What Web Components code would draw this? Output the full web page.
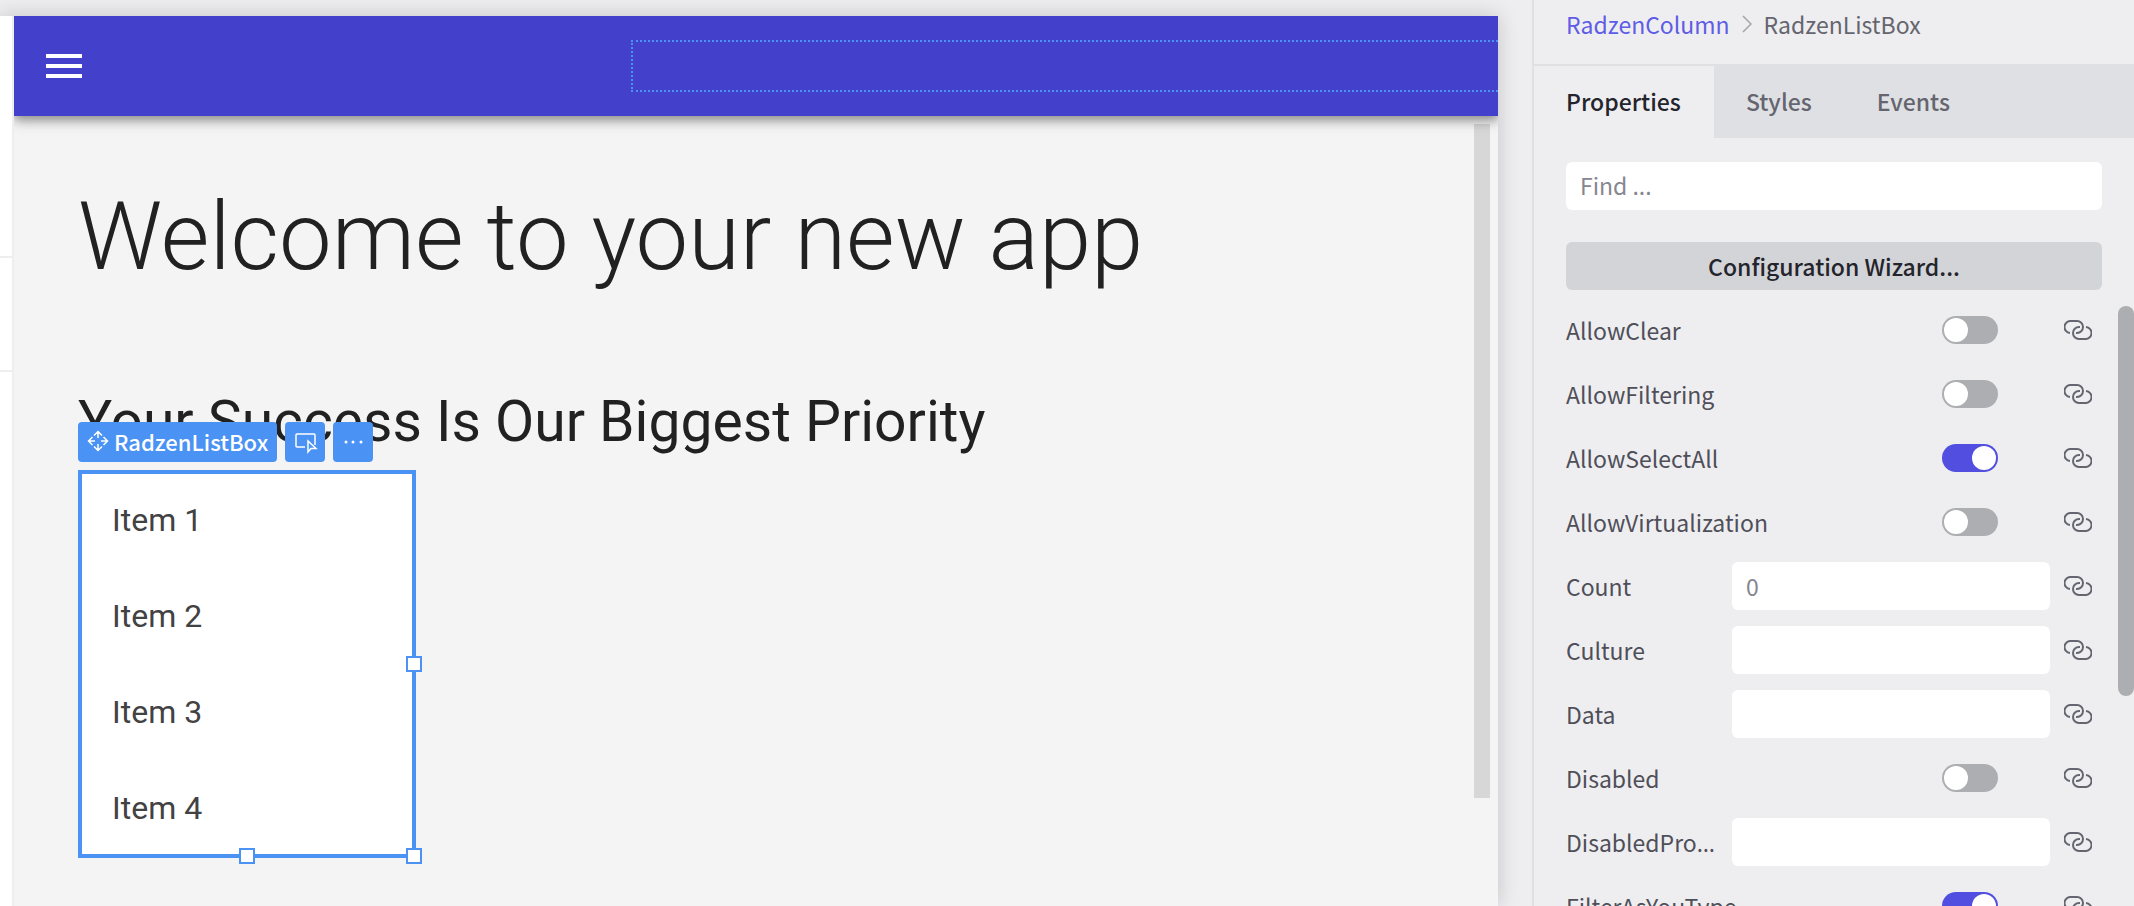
<!DOCTYPE html>
<html lang="en">
<head>
<meta charset="utf-8">
<title>Designer</title>
<style>
  html, body { height: 100%; margin: 0; }
  body {
    overflow: hidden;
    background: #eeeef0;
    font-family: "Noto Sans CJK KR", "Noto Sans", sans-serif;
    font-size: 23px;
    line-height: 32px;
    color: #4f4f59;
  }
</style>
</head>
<body>

<designer-shell>
  <app-canvas slot="canvas">
    <h1 slot="title">Welcome to your new app</h1>
    <h2 slot="subtitle">Your Success Is Our Biggest Priority</h2>
    <selected-component name="RadzenListBox">
      <list-box items="Item 1,Item 2,Item 3,Item 4"></list-box>
    </selected-component>
  </app-canvas>

  <property-panel slot="panel">
    <crumb-trail slot="crumbs" parent="RadzenColumn" current="RadzenListBox"></crumb-trail>
    <tab-strip slot="tabs" tabs="Properties,Styles,Events"></tab-strip>
    <property-row name="AllowClear" type="switch"></property-row>
    <property-row name="AllowFiltering" type="switch"></property-row>
    <property-row name="AllowSelectAll" type="switch" checked></property-row>
    <property-row name="AllowVirtualization" type="switch"></property-row>
    <property-row name="Count" type="text" hint="0"></property-row>
    <property-row name="Culture" type="text"></property-row>
    <property-row name="Data" type="text"></property-row>
    <property-row name="Disabled" type="switch"></property-row>
    <property-row name="DisabledProperty" type="text"></property-row>
    <property-row name="FilterAsYouType" type="switch" checked></property-row>
  </property-panel>
</designer-shell>

<script>
class DesignerShell extends HTMLElement {
  constructor() {
    super();
    this.attachShadow({ mode: 'open' }).innerHTML = `
      <style>
        :host { display: flex; height: 100vh; overflow: hidden; }
        main { flex: 1; min-width: 0; padding: 16px 34px 0 0; overflow: hidden; }
        aside { flex: 0 0 600px; border-left: 2px solid #dfe0e3; }
      </style>
      <main><slot name="canvas"></slot></main>
      <aside><slot name="panel"></slot></aside>
    `;
  }
}
customElements.define('designer-shell', DesignerShell);


class AppCanvas extends HTMLElement {
  constructor() {
    super();
    this.attachShadow({ mode: 'open' }).innerHTML = `
      <style>
        :host {
          display: flex; height: 100%;
          background: #f4f4f4;
          box-shadow: 0 0 20px rgba(0, 0, 0, 0.18);
          font-family: Roboto, sans-serif;
          color: #212121;
        }
        .rail { flex: 0 0 12px; background: #fff; border-right: 2px solid #eee; }
        .rail i { display: block; height: 112px; border-bottom: 2px solid #eee; }
        .rail i:first-child { height: 240px; }
        .app { flex: 1; min-width: 0; display: flex; flex-direction: column; }
        header {
          flex: 0 0 100px; box-sizing: border-box; padding-left: 32px;
          display: flex; align-items: center; justify-content: space-between;
          position: relative; z-index: 1;
          background: #4340cb;
          box-shadow: 0 4px 10px rgba(0, 0, 0, 0.4), 0 8px 16px rgba(0, 0, 0, 0.06);
          /* keep the shadow below the bar only */
          clip-path: inset(0 0 -32px 0);
        }
        button { padding: 0; border: 0; background: none; }
        svg { display: block; width: 36px; height: 24px; }
        .drop {
          width: calc(60% - 4px); height: 52px; box-sizing: border-box;
          border: 2px dotted #4a92f3; border-right: 0;
        }
        .view { flex: 1; display: flex; min-height: 0; }
        .page { flex: 1; min-width: 0; padding: 64px 0 0 64px; }
        .bar { flex: 0 0 16px; height: 674px; margin: 8px 8px 0 0; background: #d7d7d7; }
        ::slotted(h1) { margin: 0; font-weight: 300; font-size: 94px; line-height: 114px; }
        ::slotted(h2) { margin: 88px 0 0; font-weight: 400; font-size: 57px; line-height: 80px; }
      </style>
      <div class="rail"><i></i><i></i></div>
      <div class="app">
        <header>
          <button aria-label="Toggle menu">
            <svg viewBox="0 0 36 24" fill="#fff">
              <path d="M0 0h36v4H0zM0 10h36v4H0zM0 20h36v4H0z"/>
            </svg>
          </button>
          <div class="drop"></div>
        </header>
        <div class="view">
          <div class="page">
            <slot name="title"></slot>
            <slot name="subtitle"></slot>
            <slot></slot>
          </div>
          <div class="bar"></div>
        </div>
      </div>
    `;
  }
}
customElements.define('app-canvas', AppCanvas);


class SelectedComponent extends HTMLElement {
  constructor() {
    super();
    this.attachShadow({ mode: 'open' }).innerHTML = `
      <style>
        :host {
          display: block; position: relative;
          width: 338px; box-sizing: border-box; margin-top: 8px;
          border: 4px solid #4a92f3;
        }
        /* toolbar floats above the selection outline */
        .tools {
          position: absolute; left: -4px; bottom: 100%; margin-bottom: 12px;
          display: flex; gap: 8px;
        }
        button {
          height: 40px; padding: 0 10px; border: 0; border-radius: 4px;
          display: flex; align-items: center; gap: 6px;
          background: #4a92f3; color: #fff; white-space: nowrap;
          font: 500 22px/32px "Noto Sans CJK KR", "Noto Sans", sans-serif;
        }
        button:first-child { padding: 0 9px 2px 10px; }
        svg { display: block; width: 20px; height: 20px; fill: none; stroke: #fff; stroke-width: 1.5; overflow: visible; }
        .handle {
          position: absolute; width: 16px; height: 16px; box-sizing: border-box;
          background: #fff; border: 2px solid #4a92f3;
        }
        .e { right: -10px; top: calc(50% - 8px); }
        .s { bottom: -10px; left: calc(50% - 8px); }
        .se { right: -10px; bottom: -10px; }
      </style>
      <slot></slot>
      <div class="tools">
        <button>
          <svg viewBox="0 0 20 20">
            <path d="M10 1v6M10 13v6M1 10h6M13 10h6M6 4.500l4-4 4 4M6 15.500l4 4 4-4M4.500 6l-4 4 4 4M15.500 6l4 4-4 4"/>
          </svg>
          <span></span>
        </button>
        <button aria-label="Select parent">
          <svg viewBox="0 0 20 20"><path d="M10 15H2a1 1 0 0 1-1-1V3a1 1 0 0 1 1-1h17a1 1 0 0 1 1 1v10M13 9v11l3-3.500h5z"/></svg>
        </button>
        <button aria-label="More">
          <svg viewBox="0 0 20 20"><g fill="#fff" stroke="none"><circle cx="3" cy="10" r="1.500"/><circle cx="10" cy="10" r="1.500"/><circle cx="18" cy="10" r="1.500"/></g></svg>
        </button>
      </div>
      <i class="handle e"></i><i class="handle s"></i><i class="handle se"></i>
    `;
  }

  connectedCallback() {
    this.shadowRoot.querySelector('span').textContent = this.getAttribute('name');
  }
}
customElements.define('selected-component', SelectedComponent);


class ListBox extends HTMLElement {
  constructor() {
    super();
    this.attachShadow({ mode: 'open' }).innerHTML = `
      <style>
        :host { display: block; background: #fff; }
        ul { margin: 0; padding: 22px 30px; list-style: none; display: grid; gap: 48px; }
        li { font-size: 32px; line-height: 48px; color: #424242; }
      </style>
      <ul></ul>
    `;
  }

  connectedCallback() {
    this.shadowRoot.querySelector('ul').innerHTML =
      this.getAttribute('items').split(',').map(item => `<li>${item}</li>`).join('');
  }
}
customElements.define('list-box', ListBox);


class PropertyPanel extends HTMLElement {
  constructor() {
    super();
    this.attachShadow({ mode: 'open' }).innerHTML = `
      <style>
        :host { display: block; height: 100%; }
        .scroll { position: relative; padding: 24px 32px 0; }
        .rows { margin-top: 8px; }
        input, button {
          display: block; width: 100%; height: 48px; box-sizing: border-box;
          border: 0; border-radius: 6px; font: inherit;
        }
        input { padding: 0 14px 2px; background: #fff; }
        input::placeholder { color: #86868f; opacity: 1; }
        button { margin-top: 32px; background: #d3d4d7; color: #24242c; font-weight: 500; }
        .thumb {
          position: absolute; right: 0; top: 168px; width: 16px; height: 390px;
          border-radius: 8px; background: #adaeb2;
        }
      </style>
      <slot name="crumbs"></slot>
      <slot name="tabs"></slot>
      <div class="scroll">
        <input type="text" placeholder="Find ..." aria-label="Find">
        <button>Configuration Wizard...</button>
        <div class="rows"><slot></slot></div>
        <div class="thumb"></div>
      </div>
    `;
  }
}
customElements.define('property-panel', PropertyPanel);


class CrumbTrail extends HTMLElement {
  constructor() {
    super();
    this.attachShadow({ mode: 'open' }).innerHTML = `
      <style>
        :host { display: block; padding: 8px 32px 24px; border-bottom: 2px solid #dfe0e3; }
        nav { display: flex; align-items: center; gap: 12px; color: #65656f; }
        a { color: #5f5ce6; text-decoration: none; }
        svg { width: 10px; height: 18px; fill: none; stroke: #a3a3aa; stroke-width: 1.5; }
      </style>
      <nav>
        <a href="#"></a>
        <svg viewBox="0 0 10 18"><path d="M1 1l8 8-8 8"/></svg>
        <span></span>
      </nav>
    `;
  }

  connectedCallback() {
    this.shadowRoot.querySelector('a').textContent = this.getAttribute('parent');
    this.shadowRoot.querySelector('span').textContent = this.getAttribute('current');
  }
}
customElements.define('crumb-trail', CrumbTrail);


class TabStrip extends HTMLElement {
  constructor() {
    super();
    this.attachShadow({ mode: 'open' }).innerHTML = `
      <style>
        :host { display: block; background: #dfe0e3; }
        div { display: flex; }
        button {
          height: 72px; padding: 0 33px 2px 32px; border: 0;
          background: none; color: #65656f;
          font: inherit; font-weight: 500;
        }
        button[aria-selected="true"] { background: #eeeef0; color: #24242c; }
      </style>
      <div role="tablist"></div>
    `;
  }

  connectedCallback() {
    this.shadowRoot.querySelector('div').innerHTML = this.getAttribute('tabs').split(',')
      .map((tab, i) => `<button role="tab" aria-selected="${i === 0}">${tab}</button>`).join('');
  }
}
customElements.define('tab-strip', TabStrip);


class PropertyRow extends HTMLElement {
  constructor() {
    super();
    this._shadowRoot = this.attachShadow({ mode: 'open' });
  }

  connectedCallback() {
    const type = this.getAttribute('type');
    const name = this.getAttribute('name');

    const editor = type === 'switch'
      ? `<input id="editor" type="checkbox" role="switch" ${this.hasAttribute('checked') ? 'checked' : ''}>`
      : `<input id="editor" type="text" placeholder="${this.getAttribute('hint') || ''}">`;

    this._shadowRoot.innerHTML = `
      <style>
        :host { display: flex; align-items: center; height: 64px; }
        /* the ellipsis takes the label's font, the CJK one would centre its dots */
        label {
          flex: 0 0 162px; margin-right: 4px; line-height: 40px;
          font-family: "Noto Sans", sans-serif;
          overflow: hidden; text-overflow: ellipsis; white-space: nowrap;
        }
        label span { font-family: "Noto Sans CJK KR", "Noto Sans", sans-serif; }
        label.wide { flex: 1; overflow: visible; }
        input { box-sizing: border-box; margin: 0; }
        input[type="text"] {
          flex: 1; min-width: 0; height: 48px; padding: 0 14px;
          border: 0; border-radius: 6px; background: #fff; font: inherit;
        }
        input::placeholder { color: #86868f; opacity: 1; }
        input[type="checkbox"] {
          appearance: none; width: 56px; height: 28px; padding: 2px; margin-right: 52px;
          border-radius: 14px; background: #adaeb2; display: flex;
        }
        input[type="checkbox"]::before {
          content: ""; width: 24px; height: 24px; border-radius: 50%; background: #fff;
        }
        input[type="checkbox"]:checked { background: #514ee0; justify-content: flex-end; }
        button { flex: 0 0 28px; padding: 0; margin: 0 10px 0 14px; border: 0; background: none; }
        svg { display: block; width: 28px; height: 20px; fill: none; stroke: #65656f; stroke-width: 2; }
      </style>
      <label for="editor" class="${type === 'switch' ? 'wide' : ''}"><span>${name}</span></label>
      ${editor}
      <button aria-label="Bind ${name}">
        <svg viewBox="0 0 28 20">
          <path d="M6 13A6 6 0 0 1 7 1h6a6 6 0 0 1 0 12h-1"/>
          <path d="M22 7a6 6 0 0 1-1 12h-6a6 6 0 0 1 0-12h1"/>
        </svg>
      </button>
    `;
  }
}
customElements.define('property-row', PropertyRow);
</script>
</body>
</html>
